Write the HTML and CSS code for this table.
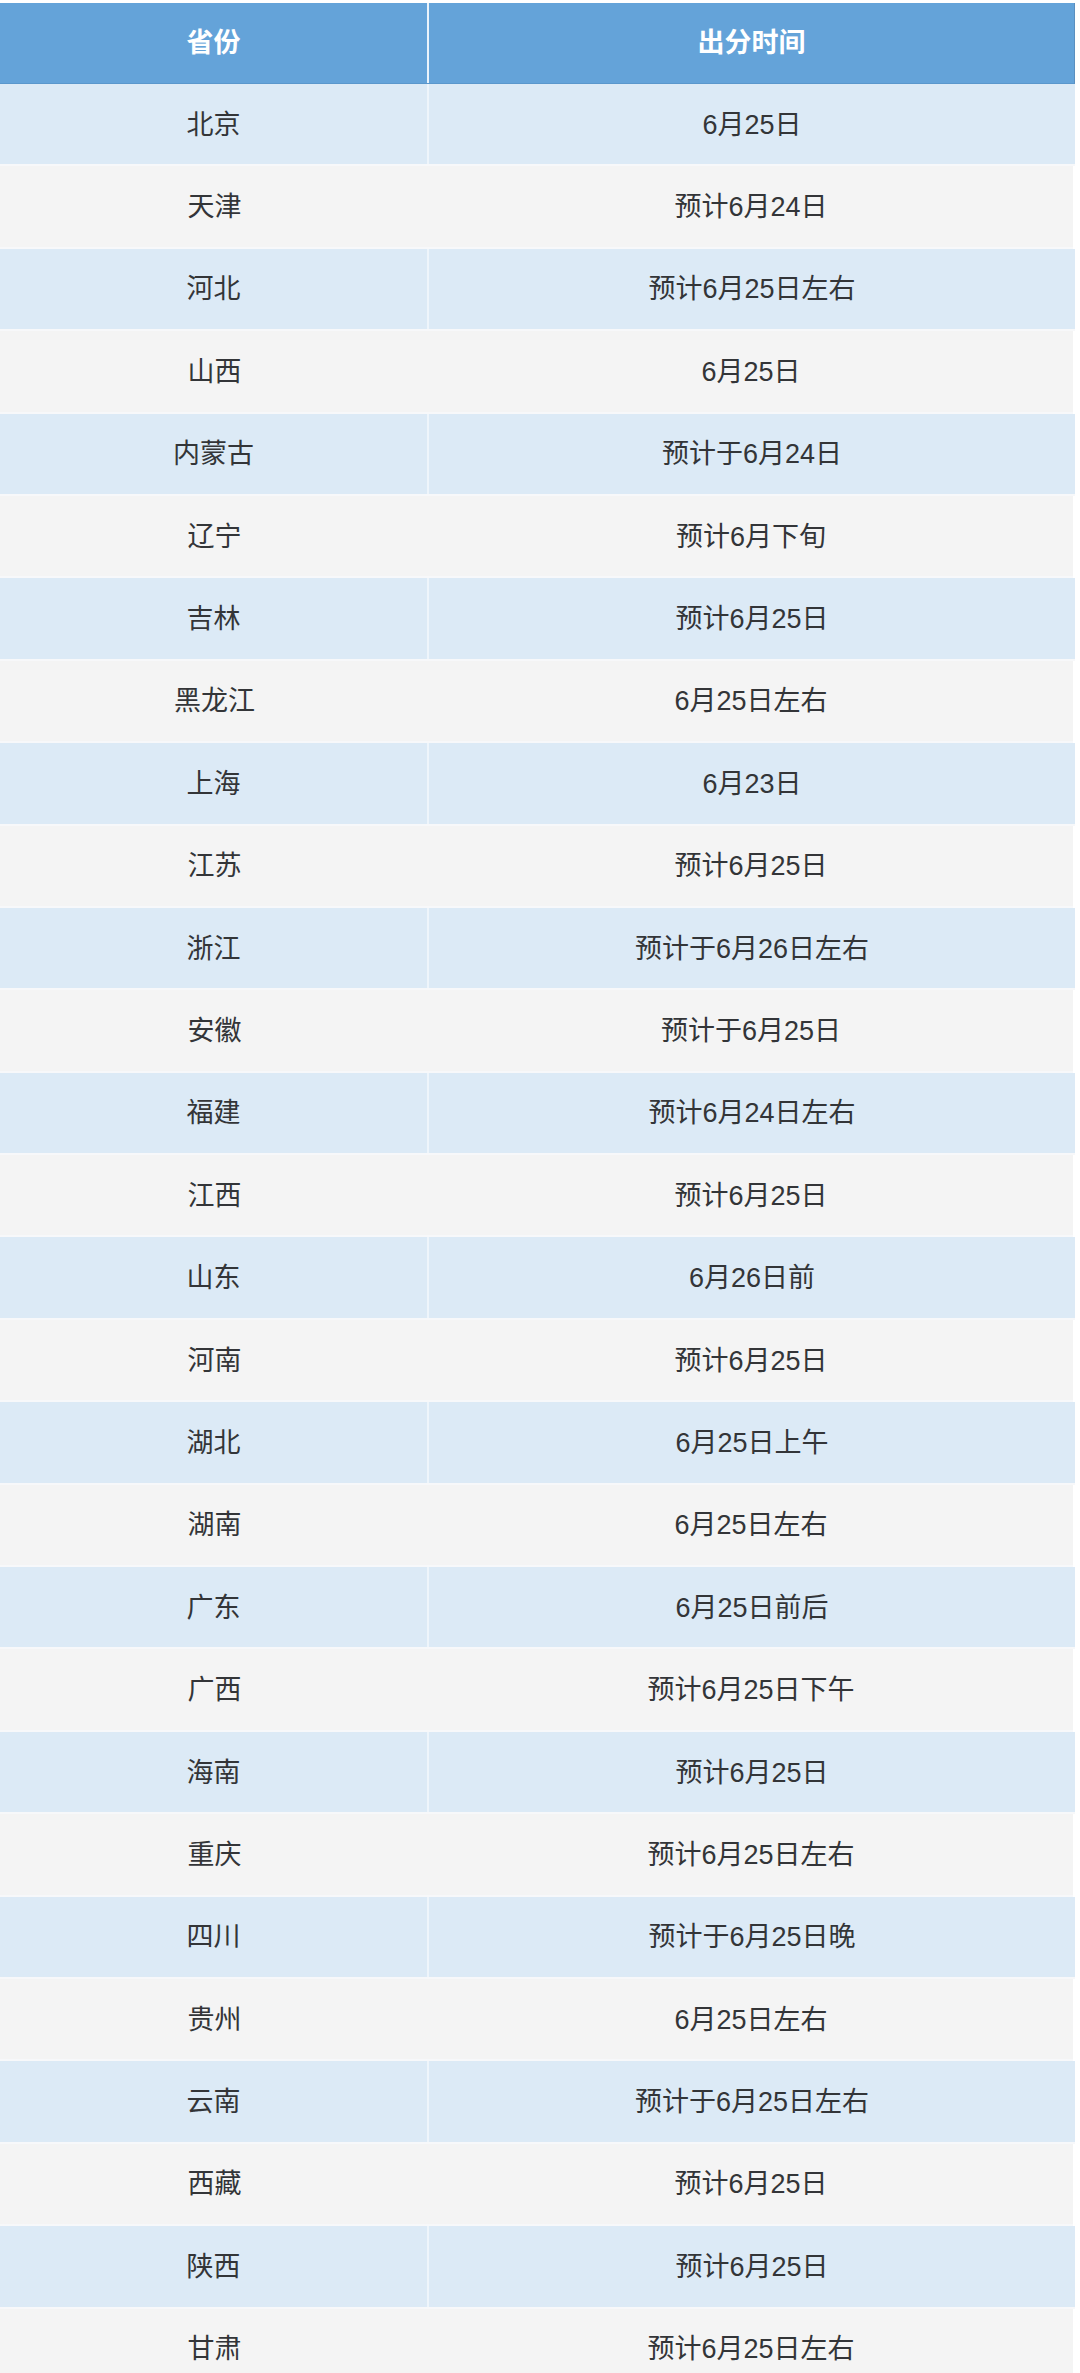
FILE: index.html
```html
<!DOCTYPE html>
<html lang="zh-CN">
<head>
<meta charset="utf-8">
<title>各省出分时间</title>
<link rel="stylesheet" href="styles.css">
</head>
<body>
<div class="table" role="table">
  <div class="row head" role="row"><div class="cell c1" role="columnheader">省份</div><div class="cell c2" role="columnheader">出分时间</div></div>
  <div class="row blue" role="row"><div class="cell c1">北京</div><div class="cell c2">6月25日</div></div>
  <div class="row grey" role="row"><div class="cell c1">天津</div><div class="cell c2">预计6月24日</div></div>
  <div class="row blue" role="row"><div class="cell c1">河北</div><div class="cell c2">预计6月25日左右</div></div>
  <div class="row grey" role="row"><div class="cell c1">山西</div><div class="cell c2">6月25日</div></div>
  <div class="row blue" role="row"><div class="cell c1">内蒙古</div><div class="cell c2">预计于6月24日</div></div>
  <div class="row grey" role="row"><div class="cell c1">辽宁</div><div class="cell c2">预计6月下旬</div></div>
  <div class="row blue" role="row"><div class="cell c1">吉林</div><div class="cell c2">预计6月25日</div></div>
  <div class="row grey" role="row"><div class="cell c1">黑龙江</div><div class="cell c2">6月25日左右</div></div>
  <div class="row blue" role="row"><div class="cell c1">上海</div><div class="cell c2">6月23日</div></div>
  <div class="row grey" role="row"><div class="cell c1">江苏</div><div class="cell c2">预计6月25日</div></div>
  <div class="row blue" role="row"><div class="cell c1">浙江</div><div class="cell c2">预计于6月26日左右</div></div>
  <div class="row grey" role="row"><div class="cell c1">安徽</div><div class="cell c2">预计于6月25日</div></div>
  <div class="row blue" role="row"><div class="cell c1">福建</div><div class="cell c2">预计6月24日左右</div></div>
  <div class="row grey" role="row"><div class="cell c1">江西</div><div class="cell c2">预计6月25日</div></div>
  <div class="row blue" role="row"><div class="cell c1">山东</div><div class="cell c2">6月26日前</div></div>
  <div class="row grey" role="row"><div class="cell c1">河南</div><div class="cell c2">预计6月25日</div></div>
  <div class="row blue" role="row"><div class="cell c1">湖北</div><div class="cell c2">6月25日上午</div></div>
  <div class="row grey" role="row"><div class="cell c1">湖南</div><div class="cell c2">6月25日左右</div></div>
  <div class="row blue" role="row"><div class="cell c1">广东</div><div class="cell c2">6月25日前后</div></div>
  <div class="row grey" role="row"><div class="cell c1">广西</div><div class="cell c2">预计6月25日下午</div></div>
  <div class="row blue" role="row"><div class="cell c1">海南</div><div class="cell c2">预计6月25日</div></div>
  <div class="row grey" role="row"><div class="cell c1">重庆</div><div class="cell c2">预计6月25日左右</div></div>
  <div class="row blue" role="row"><div class="cell c1">四川</div><div class="cell c2">预计于6月25日晚</div></div>
  <div class="row grey" role="row"><div class="cell c1">贵州</div><div class="cell c2">6月25日左右</div></div>
  <div class="row blue" role="row"><div class="cell c1">云南</div><div class="cell c2">预计于6月25日左右</div></div>
  <div class="row grey" role="row"><div class="cell c1">西藏</div><div class="cell c2">预计6月25日</div></div>
  <div class="row blue" role="row"><div class="cell c1">陕西</div><div class="cell c2">预计6月25日</div></div>
  <div class="row grey" role="row"><div class="cell c1">甘肃</div><div class="cell c2">预计6月25日左右</div></div>
</div>
</body>
</html>
```
FILE: styles.css
```css
html, body {
  margin: 0;
  padding: 0;
  background: #ffffff;
}

body {
  font-family: "Liberation Sans", "Noto Sans CJK SC", sans-serif;
  color: #333538;
  overflow: hidden;
}

.table {
  width: 1075px;
  padding-top: 3px;
  display: flex;
  flex-direction: column;
}

.row {
  display: grid;
  grid-template-columns: 429px 1fr;
  height: 82.4px;
  box-sizing: border-box;
  border-bottom: 2px solid #f7f8fa;
}

.cell {
  display: flex;
  align-items: center;
  justify-content: center;
  font-size: 27px;
  line-height: 1;
  padding-top: 2px;
}

.head {
  height: 81px;
  background: #64a3d9;
  border-bottom: 1px solid #5a97cc;
  border-right: 1px solid #5b8fbf;
}

.head .cell {
  color: #ffffff;
  font-weight: 700;
  padding-top: 0;
}

.head .c1 {
  border-right: 2px solid #eaf3fb;
}

.blue {
  background: #dceaf6;
}

.blue .c1 {
  border-right: 2px solid #eef5fb;
}

.grey {
  background: #f4f4f4;
  margin-right: 2px;
}
```
